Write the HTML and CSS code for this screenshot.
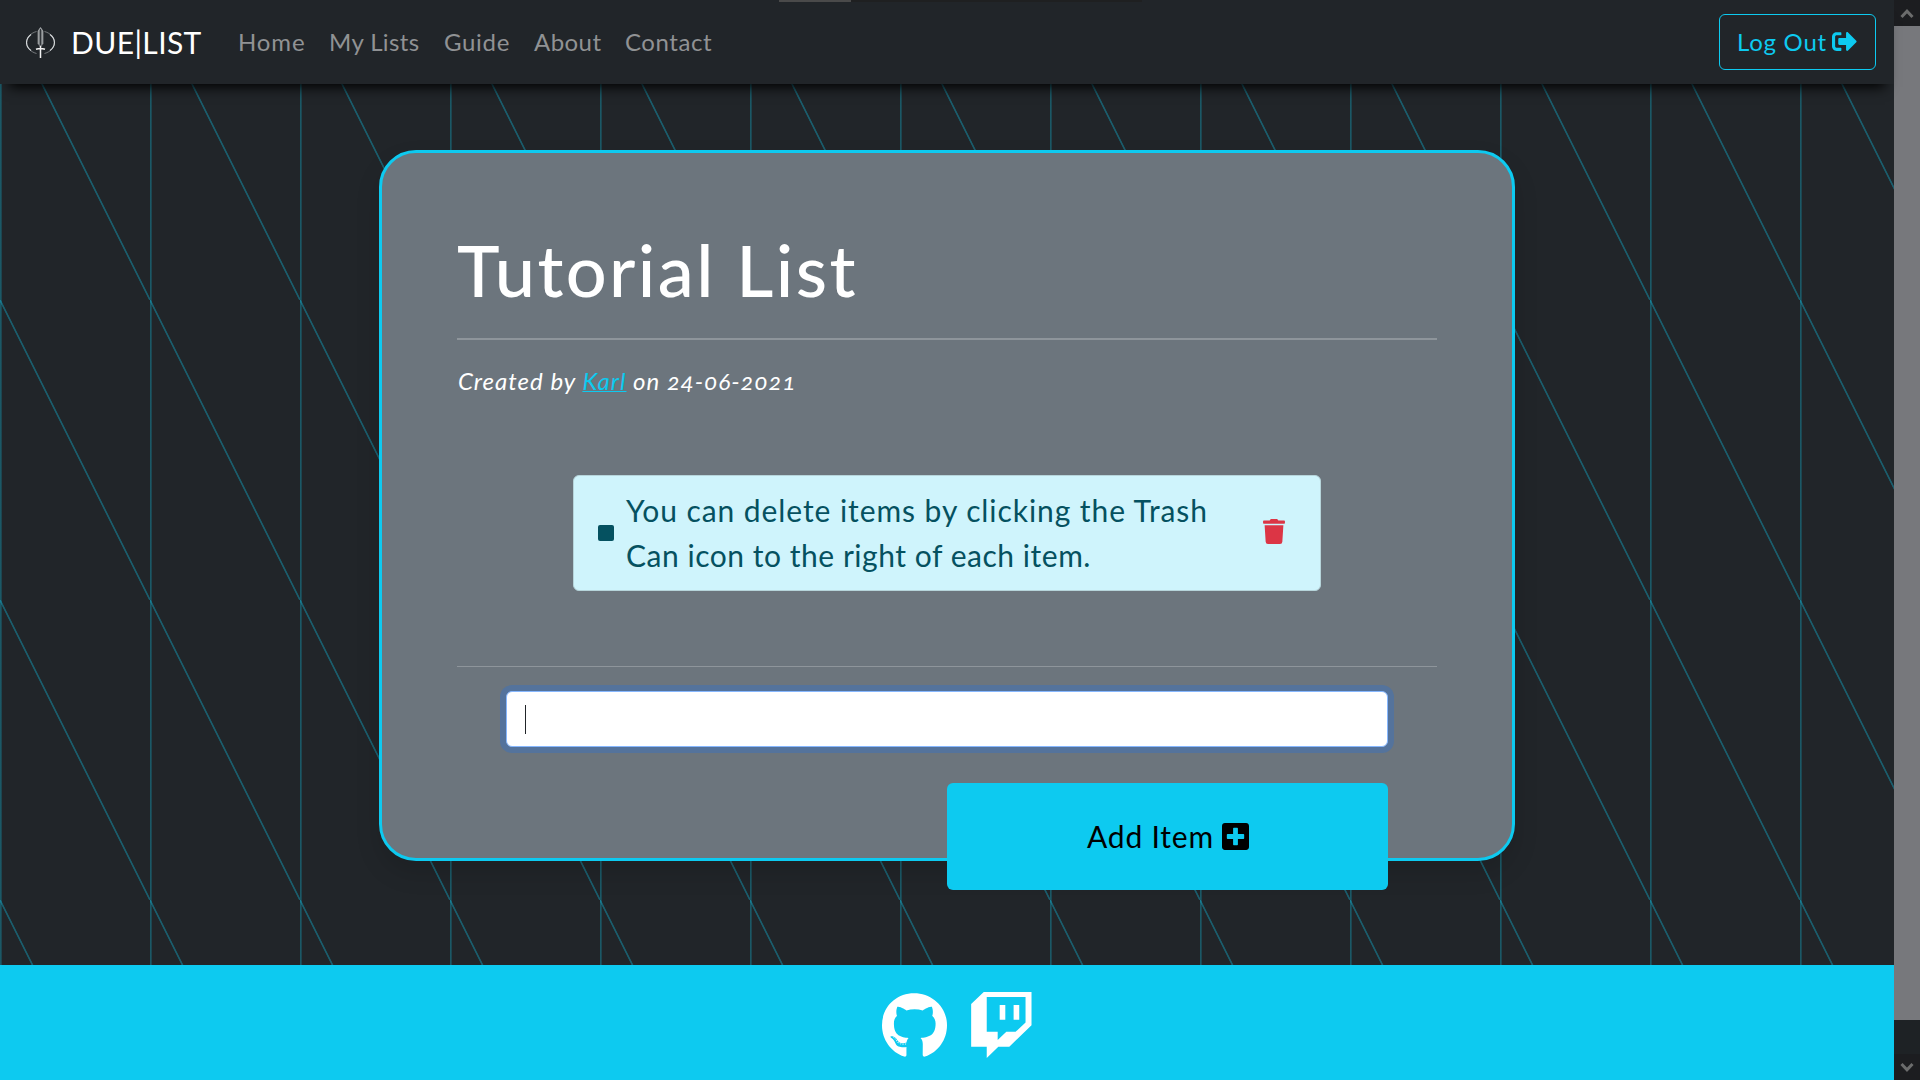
FILE: index.html
```html
<!DOCTYPE html>
<html lang="en">
<head>
<meta charset="utf-8">
<title>DUE|LIST</title>
<link rel="stylesheet" href="styles.css">
</head>
<body>
<div class="page">
  <header class="navbar">
    <a class="brand">
      <svg class="brand-logo" viewBox="0 0 30 32">
        <g fill="none" stroke="#d5d8da" stroke-width="1.1">
          <path d="M10.500 4.500C-2.500 8-2.500 23 10.500 26.500" stroke="#8b8f92" stroke-width=".8"/>
          <path d="M5 7.500C-1 12-1 19 5 23.500"/>
          <path d="M18.500 4.500C31.500 8 31.500 23 18.500 26.500" stroke="#8b8f92" stroke-width=".8"/>
          <path d="M24 7.500C30 12 30 19 24 23.500"/>
        </g>
        <path d="M14.500 0L17.300 4V17L14.500 20.500L11.700 17V4Z" fill="#777b7e"/>
        <path d="M14.500 2V18" stroke="#303438" stroke-width="1"/>
        <path d="M12.300 17V4L14.500 .7L16.700 4V17" fill="none" stroke="#aeb1b3" stroke-width=".8"/>
        <path d="M14.500 19V31M10 22.300Q14.500 20.500 19 22.300" fill="none" stroke="#f2f2f2" stroke-width="1.500"/>
      </svg>
      <span>DUE|LIST</span>
    </a>
    <nav class="nav-links">
      <a class="home">Home</a><a class="lists">My Lists</a><a class="guide">Guide</a><a class="about">About</a><a class="contact">Contact</a>
    </nav>
    <a class="logout"><span>Log Out</span>
      <svg viewBox="0 0 512 512"><path fill="currentColor" d="M497 273L329 441c-15 15-41 4.500-41-17v-96H152c-13.300 0-24-10.700-24-24v-96c0-13.300 10.700-24 24-24h136V88c0-21.400 25.900-32 41-17l168 168c9.300 9.400 9.300 24.600 0 34zM192 436v-40c0-6.600-5.400-12-12-12H96c-17.700 0-32-14.300-32-32V160c0-17.700 14.300-32 32-32h84c6.600 0 12-5.400 12-12V76c0-6.600-5.400-12-12-12H96c-53 0-96 43-96 96v192c0 53 43 96 96 96h84c6.600 0 12-5.400 12-12z"/></svg>
    </a>
    <div class="tab-strip"><i></i></div>
  </header>

  <main class="content">
    <section class="card">
      <h1>Tutorial List</h1>
      <hr class="thick">
      <p class="byline">Created by <a>Karl</a> on 24-06-2021</p>
      <div class="item">
        <span class="bullet"></span>
        <p>You can delete items by clicking the Trash<br><span class="second">Can icon to the right of each item.</span></p>
        <svg class="trash" viewBox="0 0 448 512"><path fill="currentColor" d="M432 32H312l-9.400-18.700A24 24 0 0 0 281.100 0H166.800a23.720 23.720 0 0 0-21.400 13.300L136 32H16A16 16 0 0 0 0 48v32a16 16 0 0 0 16 16h416a16 16 0 0 0 16-16V48a16 16 0 0 0-16-16zM53.200 467a48 48 0 0 0 47.900 45h245.800a48 48 0 0 0 47.900-45L416 128H32z"/></svg>
      </div>
      <hr>
      <div class="field"><span class="caret"></span></div>
      <button class="add"><span>Add Item</span>
        <svg viewBox="0 32 448 448"><path fill="currentColor" d="M400 32H48C21.500 32 0 53.500 0 80v352c0 26.500 21.500 48 48 48h352c26.500 0 48-21.500 48-48V80c0-26.500-21.500-48-48-48zm-32 252c0 6.600-5.400 12-12 12h-92v92c0 6.600-5.400 12-12 12h-56c-6.600 0-12-5.400-12-12v-92H92c-6.600 0-12-5.400-12-12v-56c0-6.600 5.400-12 12-12h92v-92c0-6.600 5.400-12 12-12h56c6.600 0 12 5.400 12 12v92h92c6.600 0 12 5.400 12 12v56z"/></svg>
      </button>
    </section>
  </main>

  <footer class="footer">
    <svg class="github" viewBox="0 8 496 484"><path fill="currentColor" d="M165.900 397.400c0 2-2.300 3.600-5.200 3.600-3.300.3-5.600-1.300-5.600-3.600 0-2 2.300-3.600 5.200-3.600 3-.3 5.600 1.300 5.600 3.600zm-31.100-4.500c-.7 2 1.300 4.300 4.300 4.900 2.600 1 5.600 0 6.200-2s-1.300-4.300-4.300-5.200c-2.600-.7-5.500.3-6.200 2.300zm44.200-1.700c-2.900.7-4.900 2.600-4.600 4.900.3 2 2.900 3.300 5.900 2.600 2.900-.7 4.900-2.600 4.600-4.600-.3-1.900-3-3.200-5.900-2.900zM244.800 8C106.100 8 0 113.300 0 252c0 110.900 69.800 205.800 169.500 239.200 12.800 2.300 17.300-5.600 17.300-12.100 0-6.200-.3-40.400-.3-61.400 0 0-70 15-84.700-29.800 0 0-11.400-29.100-27.800-36.600 0 0-22.900-15.700 1.600-15.400 0 0 24.900 2 38.600 25.800 21.900 38.600 58.600 27.500 72.900 20.900 2.300-16 8.800-27.100 16-33.700-55.900-6.200-112.300-14.300-112.300-110.500 0-27.500 7.600-41.300 23.600-58.900-2.600-6.500-11.100-33.300 2.600-67.900 20.900-6.500 69 27 69 27 20-5.600 41.500-8.500 62.800-8.500s42.800 2.900 62.800 8.500c0 0 48.100-33.600 69-27 13.700 34.700 5.200 61.400 2.600 67.900 16 17.700 25.800 31.500 25.800 58.900 0 96.500-58.900 104.200-114.800 110.500 9.200 7.900 17 22.900 17 46.400 0 33.700-.3 75.400-.3 83.600 0 6.500 4.600 14.400 17.300 12.100C428.200 457.800 496 362.900 496 252 496 113.300 383.500 8 244.800 8zM97.200 352.900c-1.300 1-1 3.300.7 5.200 1.600 1.600 3.900 2.300 5.200 1 1.300-1 1-3.300-.7-5.200-1.600-1.600-3.900-2.300-5.200-1zm-10.800-8.100c-.7 1.300.3 2.900 2.300 3.900 1.600 1 3.600.7 4.300-.7.7-1.300-.3-2.900-2.300-3.900-2-.6-3.600-.3-4.300.7zm32.400 35.600c-1.600 1.300-1 4.300 1.300 6.200 2.300 2.300 5.200 2.600 6.500 1 1.300-1.300.7-4.300-1.300-6.200-2.200-2.300-5.200-2.600-6.500-1zm-11.400-14.700c-1.600 1-1.600 3.600 0 5.900 1.600 2.300 4.300 3.300 5.600 2.300 1.600-1.300 1.600-3.900 0-6.200-1.400-2.300-4-3.300-5.600-2z"/></svg>
    <svg class="twitch" viewBox="0 0 183 199"><path fill="currentColor" fill-rule="evenodd" d="M38 0H182V100L115 165H82L47 199V165H0V36ZM47 15V120H80V145L106 120H134L164 92V15ZM86 39H103V84H86ZM128 39H145V84H128Z"/></svg>
  </footer>
</div>
<aside class="scrollbar">
  <span class="arrow"><svg viewBox="0 0 14 11"><path d="M1.500 9L7 3.200L12.500 9"/></svg></span>
  <span class="thumb"></span>
  <span class="arrow down"><svg viewBox="0 0 14 11"><path d="M1.500 2L7 7.800L12.500 2"/></svg></span>
</aside>
</body>
</html>
```
FILE: styles.css
```css
* { box-sizing: border-box; }

body {
  margin: 0;
  height: 1080px;
  display: flex;
  overflow: hidden;
  font-family: Lato, "Open Sans", sans-serif;
  font-size: 24px;
  color: #fff;
  background: #212529;
}

h1, p { margin: 0; font-weight: 400; }
svg { display: block; flex: none; }

.page {
  width: 1894px;
  display: flex;
  flex-direction: column;
  background-image:
    linear-gradient(to right, rgba(13, 202, 240, .31) 1px, rgba(13, 202, 240, .2) 1px, rgba(13, 202, 240, .2) 2px, transparent 2px),
    linear-gradient(to top right, transparent calc(50% - 1.200px), rgba(13, 202, 240, .34) calc(50% - .5px), rgba(13, 202, 240, .34) calc(50% + .5px), transparent calc(50% + 1.200px));
  background-size: 150px 300px;
}

.navbar {
  position: relative;
  z-index: 1;
  height: 84px;
  flex: none;
  display: flex;
  align-items: center;
  padding: 0 18px 0 26px;
  background: #212529;
  box-shadow: 0 12px 12px -9px #000;
}

.brand { display: flex; align-items: center; gap: 15px; font-size: 30px; line-height: 40px; width: 212px; letter-spacing: .4px; white-space: nowrap; }
.brand-logo { width: 30px; height: 32px; margin-top: 2px; }

.nav-links { display: flex; color: #909294; line-height: 36px; white-space: nowrap; }
.home { width: 91px; letter-spacing: .9px; }
.lists { width: 115px; letter-spacing: .4px; }
.guide { width: 90px; letter-spacing: .7px; }
.about { width: 91px; letter-spacing: .45px; }
.contact { letter-spacing: .55px; }

.logout {
  margin-left: auto;
  width: 157px;
  height: 56px;
  display: flex;
  align-items: center;
  justify-content: space-between;
  padding: 0 18px 2px 17px;
  border: 1px solid #0dcaf0;
  border-radius: 6px;
  color: #0dcaf0;
  letter-spacing: .75px;
  white-space: nowrap;
}
.logout svg { width: 25px; height: 25px; }

.tab-strip { position: absolute; left: 779px; top: 0; width: 363px; height: 2px; background: #1f2021; }
.tab-strip i { display: block; width: 72px; height: 2px; background: #4a4a4a; }

.content { height: 881px; padding-top: 66px; }

.card {
  width: 1136px;
  height: 711px;
  margin: 0 auto;
  padding: 0 75px;
  border: 3px solid #0dcaf0;
  border-radius: 37px;
  background: #6c757d;
  box-shadow: 0 12px 24px rgba(0, 0, 0, .13);
}

h1 { padding-top: 73px; height: 185px; font-size: 72px; line-height: 86px; font-weight: 500; letter-spacing: 2.400px; }

hr { height: 1px; margin: 0; border: 0; background: #8e959b; }
.thick { height: 2px; }

.byline { height: 135px; padding: 23px 0 0 1px; line-height: 36px; font-style: italic; font-variant-numeric: oldstyle-nums; letter-spacing: 1px; }
.byline a { color: #0dcaf0; text-decoration: underline; text-decoration-thickness: 1px; }

.item {
  width: 748px;
  height: 116px;
  margin: 0 auto 75px;
  display: flex;
  align-items: center;
  padding: 0 35px 0 24px;
  border: 1px solid #b6d4da;
  border-radius: 6px;
  background: #cff4fc;
  color: #055160;
  font-size: 30px;
  line-height: 45px;
  letter-spacing: .92px;
  white-space: nowrap;
}
.second { letter-spacing: .53px; }
.bullet { width: 16px; height: 16px; border-radius: 2px; background: currentColor; margin-right: 12px; }
.trash { width: 22px; height: 25px; margin: 0 0 3px auto; color: #dc3545; }

.field {
  width: 882px;
  height: 56px;
  margin: 24px auto 36px;
  padding: 13px 18px;
  border: 1px solid #86b7fe;
  border-radius: 6px;
  background: #fff;
  box-shadow: 0 0 0 6px rgba(13, 110, 253, .25);
}
.caret { display: block; width: 1px; height: 29px; background: #212529; }

.add {
  width: 441px;
  height: 107px;
  margin-left: 490px;
  padding: 0 0 1px 1px;
  display: flex;
  align-items: center;
  justify-content: center;
  gap: 8px;
  border: 0;
  border-radius: 6px;
  background: #0dcaf0;
  color: #000;
  font: 30px/45px Lato, "Open Sans", sans-serif;
  letter-spacing: .8px;
}
.add svg { width: 27px; height: 27px; }

.footer {
  flex: 1;
  display: flex;
  align-items: flex-start;
  gap: 24px;
  padding: 27px 0 0 882px;
  background: #0dcaf0;
}
.github { width: 65px; height: 64px; margin-top: 1px; }
.twitch { width: 61px; height: 66px; }

.scrollbar { width: 26px; display: flex; flex-direction: column; background: #1e2225; }
.thumb { height: 994px; background: #77787c; }
.arrow { height: 26px; display: grid; place-items: center; background: #1c1d20; }
.down { margin-top: auto; }
.arrow svg { width: 14px; height: 11px; fill: none; stroke: #6b6c6c; stroke-width: 3; }
```
